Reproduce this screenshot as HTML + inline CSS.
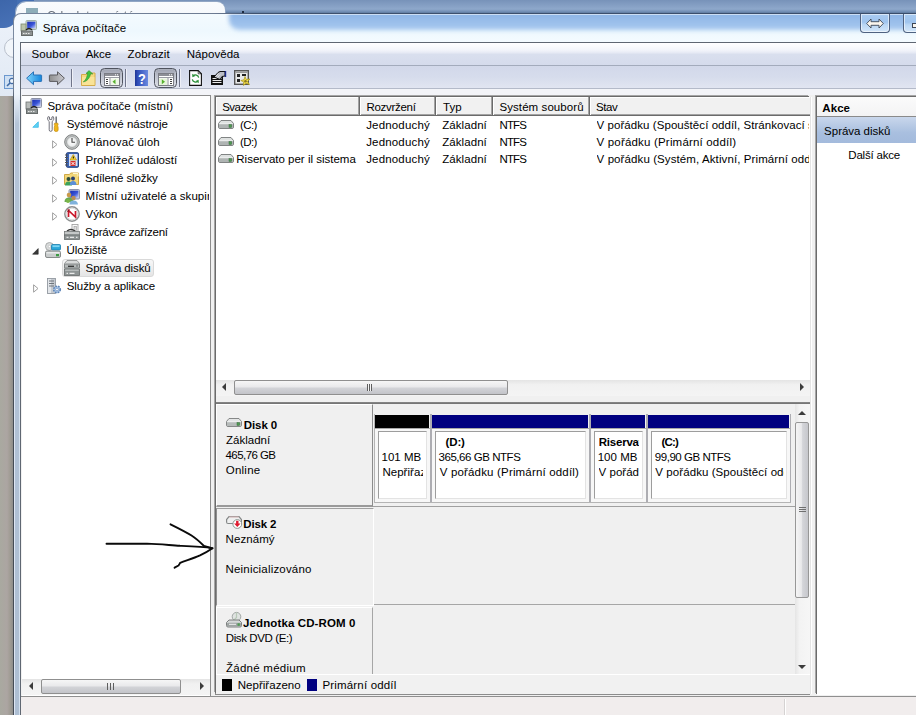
<!DOCTYPE html>
<html><head><meta charset="utf-8"><title>Správa počítače</title>
<style>
html,body{margin:0;padding:0}
body{width:916px;height:715px;overflow:hidden;position:relative;background:#f0f0f0;font-family:"Liberation Sans",sans-serif;font-size:12px;color:#000}
.a{position:absolute}
.t{position:absolute;white-space:nowrap;line-height:14px;height:14px;font-size:11.5px;color:#000}
.b{font-weight:bold}
svg{position:absolute;overflow:visible}
.sep{position:absolute;top:69px;width:1px;height:18px;background:#70758a;box-shadow:1px 0 0 #eef0f7}
.pressed{position:absolute;top:68px;width:23px;height:20px;border:1.5px solid #50545f;border-radius:4.5px;box-sizing:border-box;background:linear-gradient(#9fa3b1,#bfc3cf 45%,#dcdfe8);box-shadow:inset 0 0 0 1px rgba(255,255,255,.12)}
.tri{position:absolute;width:0;height:0}
.colsep{position:absolute;top:97px;width:1px;height:18px;background:#a3a3a3;box-shadow:1px 0 0 #6b6b6b,2px 0 0 #fff}
.hd{position:absolute;top:415px;height:13px}
.cell{position:absolute;top:429px;height:73px;background:#f7f7f7;box-sizing:border-box}
.cell i{position:absolute;left:3px;top:2px;right:3px;bottom:3px;box-sizing:border-box;background:#fff;border:1px solid #9d9d9d;border-right-color:#e3e3e3;border-bottom-color:#e3e3e3}
.vd{position:absolute;top:414px;width:2px;height:89px;background:#adadb2}
</style></head><body>

<!-- ===== background: desktop + window behind ===== -->
<div class="a" id="bgtop" style="left:0;top:0;width:916px;height:14px;background:linear-gradient(#7792b9,#8ea8cb 65%,#6a87ad 88%,#3c506c)"></div>
<div class="a" id="backleft" style="left:0;top:0;width:30px;height:96px;background:linear-gradient(#eef3fa,#e9eff8 40px,#e1e9f4)"></div>
<div class="a" id="desk2" style="left:0;top:0;width:34px;height:13px;background:#446fb3"></div>
<div class="a" id="desk" style="left:0;top:0;width:16.500px;height:28px;border-radius:0 0 13px 0;background:linear-gradient(160deg,#3d66aa,#4973b8)"></div>
<div class="a" id="backwin" style="left:16px;top:2px;width:209px;height:40px;border-radius:10px 8px 0 0;background:linear-gradient(#f9fbfd,#eef3f9);box-shadow:0 0 0 1px #91a6c4"></div>
<div class="a" style="left:26px;top:8px;width:12px;height:6px;background:#6a93a3;opacity:.75"></div>
<div class="a" style="left:47px;top:9px;width:120px;height:4.500px;overflow:hidden;white-space:nowrap;font-size:12px;line-height:14px;color:#39424f;opacity:.75;letter-spacing:.2px">Odeslat nové téma</div>
<div class="a" style="left:4px;top:38px;width:18px;height:18px;border:1px solid #b9c0cc;border-radius:50%;background:#f1f5fa"></div>
<div class="a" style="left:4px;top:75px;width:14px;height:14px;box-sizing:border-box;border:1px solid #6c98cf;background:#cfe0f3"></div>
<svg style="left:6px;top:77px" width="10" height="10" viewBox="0 0 10 10"><circle cx="6" cy="4" r="2.600" fill="#eef5fc" stroke="#3f6aa5" stroke-width="1.200"/><path d="M4 6 1 9" stroke="#3f6aa5" stroke-width="1.600"/></svg>
<div class="a" id="backgray" style="left:0;top:96px;width:14px;height:619px;background:linear-gradient(90deg,#a9a9a0,#aca5a2 50%,#a09c94 72%,#868787)"></div>
<div class="a" style="left:242px;top:11px;width:2px;height:2px;background:#1c2a40"></div>

<!-- ===== main window frame ===== -->
<div class="a" id="frameb" style="left:13px;top:13px;width:910px;height:710px;border-radius:8px 0 0 0;background:linear-gradient(90deg,#76859c 0,#6d7c93 200px,#3e516e 240px,#3a4d6a 100%)"></div>
<div class="a" style="left:13px;top:30px;width:1px;height:690px;background:linear-gradient(#7b8aa1 0,#6f7d92 60px,#454c55 72px,#454c55 100%)"></div>
<div class="a" id="frame" style="left:14px;top:14px;width:910px;height:710px;border-radius:7px 0 0 0;background:linear-gradient(#f6fafe 0,#eef4fb 80px,#b4c4d8 110px,#adbed2 100%);"></div>
<div class="a" style="left:14px;top:100px;width:1px;height:615px;background:#dde5f2"></div>
<div class="a" style="left:19px;top:100px;width:1px;height:615px;background:#d3e0ee"></div>
<div class="a" id="titlebar" style="left:21px;top:14px;width:895px;height:28px;overflow:hidden;background:linear-gradient(#f3fafe,#eef8fe 60%,#f4fbff)"><div class="a" style="left:208px;top:-8px;width:720px;height:24px;border-radius:0 0 0 10px;background:linear-gradient(#86aee2 0,#8fb6e7 9px,#a8c9ef 100%);filter:blur(2.200px)"></div><div class="a" style="left:204px;top:0;width:700px;height:1px;background:rgba(255,255,255,.55)"></div></div>

<svg style="left:21px;top:20px" width="16" height="16" viewBox="0 0 16 16"><rect x="5" y=".5" width="10.500" height="9" rx="1" fill="#c9d3cf" stroke="#9fb0a8"/><rect x="6.200" y="1.700" width="8.200" height="6.600" fill="url(#scr)"/><rect x="0" y="4" width="5" height="7" fill="#b9c4a8" stroke="#7d8a70" stroke-width=".8"/><path d="M5 10c2-2 4-2 6 0" fill="none" stroke="#222" stroke-width="1.500"/><rect x=".5" y="11" width="11" height="4.500" fill="#8d9392" stroke="#666b6a"/><path d="M2 13.500h1.500M4.500 13.500h1.500M7 13.500h1.500" stroke="#e8e8e8" stroke-width="1.200"/></svg>
<!-- caption buttons -->
<div class="a" style="left:860px;top:14px;width:30px;height:19px;box-sizing:border-box;border:1px solid #4f6281;border-top:none;border-radius:0 0 4px 4px;background:linear-gradient(#a9cbf1,#9fc4ee 45%,#b9d6f4 60%,#d4e7fa);box-shadow:inset 0 0 0 1px rgba(255,255,255,.55)"></div>
<svg style="left:866px;top:18px" width="18" height="11" viewBox="0 0 18 11"><path d="M.7 5.500 5 1v2.700h8V1l4.300 4.500L13 10V7.300H5V10z" fill="#fbf6ee" stroke="#3c4656" stroke-width=".9" stroke-linejoin="round"/></svg>
<div class="a" style="left:903px;top:14px;width:30px;height:19px;box-sizing:border-box;border:1px solid #4f6281;border-top:none;border-radius:0 0 4px 4px;background:linear-gradient(#a9cbf1,#9fc4ee 45%,#b9d6f4 60%,#d4e7fa);box-shadow:inset 0 0 0 1px rgba(255,255,255,.55)"></div>
<div class="a" style="left:912px;top:23px;width:10px;height:5px;box-sizing:border-box;background:#fbf6ee;border:1px solid #3c4656"></div>
<div class="t" id="title" style="left:42.81px;top:21px;letter-spacing:0.015px">Správa počítače</div>

<!-- ===== client ===== -->
<div class="a" id="client" style="left:21px;top:43px;width:895px;height:672px;background:#f0f0f0;box-shadow:0 0 0 1px #5f6772"></div>
<div class="a" id="menubar" style="left:21px;top:43px;width:895px;height:22px;background:linear-gradient(#fff 0,#f4f6fb 30%,#e9ecf6 42%,#d9dfee 52%,#d5dbec 100%)"></div>
<div class="t" style="left:31.46px;top:47px;letter-spacing:0.152px">Soubor</div>
<div class="t" style="left:85.75px;top:47px;letter-spacing:-0.068px">Akce</div>
<div class="t" style="left:127.62px;top:47px;letter-spacing:0.071px">Zobrazit</div>
<div class="t" style="left:186.69px;top:47px;letter-spacing:0.052px">Nápověda</div>
<div class="a" id="toolbar" style="left:21px;top:65px;width:895px;height:22px;background:linear-gradient(#d2d8ea,#d6dcec 50%,#e1e5f1);border-top:1px solid #a3abbc;border-bottom:1px solid #b4bac9"></div>
<div class="a" style="left:21px;top:89px;width:895px;height:6px;background:#f3f4f8"></div>

<!-- toolbar icons placeholder -->

<svg style="left:26px;top:71px" width="16" height="14" viewBox="0 0 16 14"><defs><linearGradient id="ga" x1="0" x2="1"><stop offset="0" stop-color="#7fd4fb"/><stop offset="1" stop-color="#1486dd"/></linearGradient><linearGradient id="gb" x1="0" x2="1"><stop offset="0" stop-color="#8e8e8e"/><stop offset="1" stop-color="#c9c9cf"/></linearGradient></defs><path d="M.6 7.2 7.5 .8V4h7.6q.5 0 .5.5v5.4q0 .5-.5.5H7.500V13.700z" fill="url(#ga)" stroke="#2b72b8" stroke-width="1"/></svg>
<svg style="left:49px;top:71px" width="16" height="14" viewBox="0 0 16 14"><path d="M15.400 7.200 8.500 .8V4H.9q-.5 0-.5.5v5.400q0 .5.500.5H8.500V13.700z" fill="url(#gb)" stroke="#5b5b5f" stroke-width="1"/></svg>
<div class="sep" style="left:71px"></div>
<svg style="left:81px;top:70px" width="15" height="16" viewBox="0 0 15 16"><path d="M.5 4.500h5l1 -1.500h7.500v12.500H.5z" fill="#f6d97f" stroke="#d3ab4b"/><path d="M1 7h12.500v8H1z" fill="#fbe9a6" opacity=".6"/><path d="M2.300 11.800C5.500 10 6 6 6.800 3.200L5 3.500 8 .6 11.800 4 9.600 3.800C8.800 8 6 11.500 2.300 11.800z" fill="#3fc43f" stroke="#2c8f2c" stroke-width=".6"/></svg>
<div class="pressed" style="left:100px"></div>
<svg style="left:104px;top:73px" width="16" height="13" viewBox="0 0 16 13"><rect x=".5" y=".5" width="15" height="12" fill="#fff" stroke="#7b7d85"/><rect x="1" y="1" width="14" height="2" fill="#8d8f96"/><rect x="11" y="1.300" width="1" height="1" fill="#fff"/><rect x="13" y="1.300" width="1" height="1" fill="#fff"/><rect x="1" y="4" width="14" height="1" fill="#9a9ca4"/><rect x="5.500" y="5" width="1" height="7.500" fill="#8d8f96"/><path d="M2 6.500h2M2 8.500h2M2 10.500h2" stroke="#444" stroke-width="1"/><rect x="7" y="5.500" width="8" height="6.500" fill="#eef8e6"/><path d="M11.500 6.200v5l-3 -2.500z" fill="#55b02e"/></svg>
<div class="sep" style="left:125px"></div>
<svg style="left:135px;top:70px" width="13" height="16" viewBox="0 0 13 16"><defs><linearGradient id="gh" x1="0" x2="1"><stop offset="0" stop-color="#1d3594"/><stop offset=".2" stop-color="#2f4db8"/><stop offset="1" stop-color="#6a8ae0"/></linearGradient></defs><rect width="13" height="16" fill="url(#gh)"/><text x="8" y="13.600" font-family="Liberation Sans" font-weight="bold" font-size="15" fill="#fff" text-anchor="middle" transform="scale(.85 1)">?</text></svg>
<div class="pressed" style="left:154px"></div>
<svg style="left:158px;top:73px" width="16" height="13" viewBox="0 0 16 13"><rect x=".5" y=".5" width="15" height="12" fill="#fff" stroke="#7b7d85"/><rect x="1" y="1" width="14" height="2" fill="#8d8f96"/><rect x="11" y="1.300" width="1" height="1" fill="#fff"/><rect x="13" y="1.300" width="1" height="1" fill="#fff"/><rect x="1" y="4" width="14" height="1" fill="#9a9ca4"/><rect x="9.500" y="5" width="1" height="7.500" fill="#8d8f96"/><path d="M12 6.500h2M12 8.500h2M12 10.500h2" stroke="#444" stroke-width="1"/><rect x="1" y="5.500" width="8" height="6.500" fill="#e6f4da"/><path d="M3.800 6.200v5l3.200 -2.500z" fill="#55b02e"/></svg>
<div class="sep" style="left:179px"></div>
<svg style="left:189px;top:70px" width="13" height="16" viewBox="0 0 13 16"><path d="M.6 .6h8.600l3.200 3.200v11.600H.6z" fill="#fff" stroke="#111" stroke-width="1.100"/><path d="M9.200 .6v3.200h3.200" fill="none" stroke="#111" stroke-width=".7"/><path d="M9.700 7.600a3.300 3.300 0 0 0 -5.600 -1.700" fill="none" stroke="#2a8f38" stroke-width="1.200"/><path d="M3.200 3.800 3.400 7.200 6.400 6z" fill="#2a8f38"/><path d="M3.300 9.400a3.300 3.300 0 0 0 5.600 1.700" fill="none" stroke="#2a8f38" stroke-width="1.200"/><path d="M9.800 13.200 9.600 9.800 6.600 11z" fill="#2a8f38"/></svg>
<svg style="left:211px;top:70px" width="16" height="15" viewBox="0 0 16 15"><rect x="0" y="5" width="12" height="10" fill="#111"/><path d="M1.500 8.500h9M1.500 10.500h9M1.500 12.500h9" stroke="#e8e8e8" stroke-width="1"/><path d="M3 7 7 2.500 9 1.500h5v4.500l-3 .5 -2 3z" fill="#b9bcc4" stroke="#111" stroke-width="1"/><path d="M5 6.500 7.500 3.500M6.500 7.500 9 4.500" stroke="#fff" stroke-width=".7"/><path d="M14.500 1v6" stroke="#1b2a8a" stroke-width="1.400"/></svg>
<svg style="left:234px;top:70px" width="17" height="16" viewBox="0 0 17 16"><rect x=".7" y=".7" width="13.600" height="13.600" fill="#e9e9e9" stroke="#555" stroke-width="1.400"/><rect x="1.500" y="1.500" width="12" height="1.500" fill="#9a9a9a"/><rect x="3" y="4" width="3" height="3" fill="#222"/><rect x="8" y="4" width="4" height="2" fill="#222"/><rect x="3" y="9" width="3" height="3" fill="#222"/><path d="M11 6.500 12.200 9.500 15.800 9 13.500 11.500 15.500 14.500 12 13.300 9.500 15.500 9.800 12 6.800 10.500 10 9.800z" fill="#f5e050" stroke="#a89410" stroke-width=".7"/><circle cx="11.500" cy="11.300" r="1.300" fill="#8a7a20"/></svg>


<!-- ===== left tree pane ===== -->
<div class="a" id="tree" style="left:22px;top:96px;width:188px;height:600px;background:#fff;box-shadow:0 -1px 0 #8c8c8c,1px 0 0 #8c8c8c,1px -1px 0 #8c8c8c"></div>
<div class="t" style="left:47.41px;top:99px;letter-spacing:0.016px">Správa počítače (místní)</div>
<div class="t" style="left:66.66px;top:117px;letter-spacing:0.021px">Systémové nástroje</div>
<div class="t" style="left:85.50px;top:135px;letter-spacing:0.164px">Plánovač úloh</div>
<div class="t" style="left:85.50px;top:153px;letter-spacing:0.011px">Prohlížeč událostí</div>
<div class="t" style="left:85.11px;top:171px;letter-spacing:-0.110px">Sdílené složky</div>
<div class="t" style="left:85.59px;top:189px;width:123.01px;overflow:hidden;letter-spacing:0.078px">Místní uživatelé a skupiny</div>
<div class="t" style="left:85.52px;top:207px;letter-spacing:0.009px">Výkon</div>
<div class="t" style="left:85.11px;top:225px;letter-spacing:-0.223px">Správce zařízení</div>
<div class="t" style="left:66.61px;top:243px;letter-spacing:-0.058px">Úložiště</div>
<div class="a" style="left:62px;top:259px;width:92px;height:17.5px;background:linear-gradient(#f8f8f8,#e5e5e5);border:1px solid #d9d9d9;border-radius:3px;box-sizing:border-box"></div>
<div class="t" style="left:85.61px;top:261px;letter-spacing:-0.130px">Správa disků</div>
<div class="t" style="left:66.71px;top:279px;letter-spacing:-0.064px">Služby a aplikace</div>
<svg style="left:26px;top:98px" width="16" height="16" viewBox="0 0 16 16"><defs><linearGradient id="scr" x1="0" y1="0" x2="1" y2="1"><stop offset="0" stop-color="#1b2fb0"/><stop offset=".55" stop-color="#3a55d8"/><stop offset="1" stop-color="#c9d4ff"/></linearGradient></defs><rect x="5" y=".5" width="10.500" height="9" rx="1" fill="#c9ccd6" stroke="#8a90a6"/><rect x="6.200" y="1.700" width="8.200" height="6.600" fill="url(#scr)"/><rect x="0" y="4" width="5" height="7" fill="#b7bbb9" stroke="#6e7372" stroke-width=".8"/><path d="M5 10c2-2 4-2 6 0" fill="none" stroke="#222" stroke-width="1.500"/><rect x=".5" y="11" width="11" height="4.500" fill="#8d9392" stroke="#666b6a"/><path d="M2 13.500h1.500M4.500 13.500h1.500M7 13.500h1.500" stroke="#e8e8e8" stroke-width="1.200"/></svg><svg style="left:32px;top:121px" width="7" height="7" viewBox="0 0 7 7"><path d="M6.300 .8v5.500H.8z" fill="#5fd3f3" stroke="#3cb9e8" stroke-width=".8"/></svg><svg style="left:47px;top:116px" width="12" height="16" viewBox="0 0 12 16"><path d="M1.200 .6c-1.200 1.800 -.6 3.800 1 4.900v8.300q0 1.600 1.500 1.600t1.500 -1.600V5.500c1.600 -1.100 2.200 -3.100 1 -4.900l-1.300 .4v2.400h-2.400V1z" fill="#f6f6f6" stroke="#75757e" stroke-width="1"/><path d="M9.200 .5v7" stroke="#70747a" stroke-width="1.500"/><path d="M7.600 7.200h3.200l.3 1.500 -.5 1 .5 1.500v2.800q0 1.500 -1.900 1.500t-1.900 -1.500v-2.800l.5 -1.500 -.5 -1z" fill="#f0b719" stroke="#c48a0c" stroke-width=".7"/></svg><svg style="left:52px;top:139.5px" width="6" height="9" viewBox="0 0 6 9"><path d="M.6 .8v7.400L5 4.500z" fill="#fff" stroke="#a0a0a0" stroke-width="1"/></svg><svg style="left:64px;top:134px" width="16" height="16" viewBox="0 0 16 16"><defs><radialGradient id="clk"><stop offset="0" stop-color="#fff"/><stop offset=".7" stop-color="#eceeee"/><stop offset="1" stop-color="#b9bcbc"/></radialGradient></defs><circle cx="8" cy="8" r="7.300" fill="#c4c7c7" stroke="#7d8080" stroke-width="1"/><circle cx="8" cy="8" r="5.600" fill="url(#clk)" stroke="#9a9d9d" stroke-width=".6"/><path d="M8 4v4.300h3" fill="none" stroke="#444" stroke-width="1.100"/></svg><svg style="left:52px;top:157.5px" width="6" height="9" viewBox="0 0 6 9"><path d="M.6 .8v7.400L5 4.500z" fill="#fff" stroke="#a0a0a0" stroke-width="1"/></svg><svg style="left:64px;top:152px" width="16" height="16" viewBox="0 0 16 16"><rect x="2.500" y=".7" width="12" height="14.600" rx="1" fill="#3b64b8" stroke="#24427f"/><rect x="5" y="2" width="8.500" height="12" fill="#d7e1f5"/><path d="M1 3h3M1 5.500h3M1 8h3M1 10.500h3M1 13h3" stroke="#555" stroke-width="1"/><path d="M9.300 2.500 12.500 8H6z" fill="#f7d43a" stroke="#b48a00" stroke-width=".6"/><path d="M9.300 4.500v2" stroke="#000" stroke-width="1"/><rect x="6.500" y="9" width="5" height="5" fill="#d9302c"/><path d="M7.500 10 10.500 13M10.500 10 7.500 13" stroke="#fff" stroke-width="1"/></svg><svg style="left:52px;top:175.5px" width="6" height="9" viewBox="0 0 6 9"><path d="M.6 .8v7.400L5 4.500z" fill="#fff" stroke="#a0a0a0" stroke-width="1"/></svg><svg style="left:64px;top:171px" width="16" height="16" viewBox="0 0 16 16"><path d="M.5 3.500h5l1.200 -1.500h7.800v11.500H.5z" fill="#f3d779" stroke="#d0a945"/><path d="M9 2.500h5v3" fill="none" stroke="#fff7d0" stroke-width="1"/><circle cx="4.500" cy="8" r="2" fill="#2f4f3a"/><path d="M1 14.500q0 -4 3.500 -4t3.500 4z" fill="#3da35a"/><circle cx="9" cy="7.500" r="2" fill="#2a3f6e"/><path d="M5.800 14q0 -4 3.300 -4t3.400 4z" fill="#5b8fd6"/></svg><svg style="left:52px;top:193.5px" width="6" height="9" viewBox="0 0 6 9"><path d="M.6 .8v7.400L5 4.500z" fill="#fff" stroke="#a0a0a0" stroke-width="1"/></svg><svg style="left:64px;top:189px" width="16" height="16" viewBox="0 0 16 16"><rect x="5" y=".5" width="10.500" height="9.500" rx="1" fill="#c3c8d8" stroke="#8e95ad"/><rect x="6.200" y="1.700" width="8.200" height="7" fill="url(#scr)"/><circle cx="5" cy="6" r="2.300" fill="#c99a4a"/><path d="M.5 13q0 -4.500 4.500 -4.500t4.500 4.500z" fill="#6aa84f"/><circle cx="9.500" cy="9" r="2.200" fill="#b98d55"/><path d="M5.500 15.500q0 -4 4 -4t4.500 4z" fill="#7fb2dc"/><circle cx="4" cy="12" r="2" fill="#7ab648"/></svg><svg style="left:52px;top:211.5px" width="6" height="9" viewBox="0 0 6 9"><path d="M.6 .8v7.400L5 4.500z" fill="#fff" stroke="#a0a0a0" stroke-width="1"/></svg><svg style="left:64px;top:206px" width="16" height="16" viewBox="0 0 16 16"><circle cx="8" cy="8" r="7.200" fill="#fff" stroke="#8c8f8f" stroke-width="1.400"/><circle cx="8" cy="8" r="5.800" fill="#fff" stroke="#c9cccc" stroke-width=".7"/><path d="M4.500 11V4.500L11.500 11V5" fill="none" stroke="#c9182b" stroke-width="1.700"/><path d="M3.500 6 5.500 3.500" stroke="#7a0f1a" stroke-width="1"/></svg><svg style="left:64px;top:224px" width="16" height="16" viewBox="0 0 16 16"><rect x="8" y=".500" width="6" height="7" fill="#fafafa" stroke="#9a9a9a" stroke-width=".8"/><rect x="10" y="2.500" width="2.500" height="4" fill="#ddd" stroke="#999" stroke-width=".6"/><path d="M3 7q4 -3 8 0" fill="none" stroke="#333" stroke-width="1.400"/><rect x=".5" y="7.500" width="15" height="3.500" fill="#c5c8c8" stroke="#777b7b" stroke-width=".8"/><rect x=".5" y="11" width="15" height="4.500" fill="#8e9494" stroke="#666b6b" stroke-width=".8"/><path d="M2.500 13.300h2M6 13.300h4M12 13.300h1.500" stroke="#e6e6e6" stroke-width="1.200"/></svg><svg style="left:32px;top:248px" width="7" height="7" viewBox="0 0 7 7"><path d="M6.200 .6v5.600H.6z" fill="#3a3a3a" stroke="#222" stroke-width=".6"/></svg><svg style="left:45px;top:242px" width="16" height="16" viewBox="0 0 16 16"><circle cx="4.500" cy="4.500" r="4" fill="#d8dada" stroke="#9a9d9d" stroke-width=".8"/><circle cx="4.500" cy="4.500" r="1.200" fill="#fff" stroke="#aaa" stroke-width=".5"/><rect x="6.500" y="2.500" width="9" height="5.500" rx="1" fill="#2aa6d8" stroke="#1b7fae" stroke-width=".8"/><rect x="7.500" y="3.300" width="7" height="1.800" fill="#7fd5f2"/><rect x=".5" y="9" width="15" height="6.500" rx="1.500" fill="#c9cccc" stroke="#7c8080" stroke-width=".9"/><rect x="1.500" y="10" width="13" height="1.500" fill="#e8eaea"/><rect x="11" y="12" width="3" height="2.300" fill="#3b9a42"/></svg><svg style="left:64px;top:260px" width="16" height="16" viewBox="0 0 16 16"><path d="M3 .5h10l2.500 3v4.500H.5v-4.500z" fill="#d9dbdb" stroke="#858888" stroke-width=".8"/><rect x=".5" y="4" width="15" height="4" rx=".8" fill="#b4b8b8" stroke="#747878" stroke-width=".8"/><path d="M4 6.300h6" stroke="#333" stroke-width="1.300"/><rect x="12" y="4.800" width="2" height="2" fill="#8a8f8f"/><rect x=".5" y="9" width="15" height="6.500" fill="#8e9494" stroke="#666b6b" stroke-width=".8"/><rect x="1.200" y="9.500" width="13.600" height="1.500" fill="#b5baba"/><path d="M2.500 13.300h1.500M5.500 13.300h5" stroke="#ececec" stroke-width="1.300"/></svg><svg style="left:33px;top:283.5px" width="6" height="9" viewBox="0 0 6 9"><path d="M.6 .8v7.400L5 4.500z" fill="#fff" stroke="#a0a0a0" stroke-width="1"/></svg><svg style="left:47px;top:278px" width="15" height="16" viewBox="0 0 15 16"><rect x=".5" y=".5" width="8" height="15" fill="#c4c9cf" stroke="#8b9198" stroke-width=".8"/><rect x="1" y="1" width="3" height="14" fill="#e3e6ea"/><path d="M2 3h5M2 5.500h5M2 8h5" stroke="#6f757c" stroke-width="1"/><circle cx="10" cy="11.500" r="3.300" fill="#a9c4e6" stroke="#5f86b8" stroke-width="1.600" stroke-dasharray="1.700 1"/><circle cx="10" cy="11.500" r="1.300" fill="#fff" stroke="#5f86b8" stroke-width=".6"/></svg>

<!-- ===== middle list pane ===== -->
<div class="a" id="mid" style="left:216px;top:97px;width:594px;height:597px;background:#f0f0f0;box-shadow:-1px -1px 0 #6b6b6b,-2px -2px 0 #a6a6a6,-1px 1px 0 #8c8c8c,0 1px 0 #8c8c8c,1px 0 0 #e4e4e4,2px 0 0 #fff"></div>
<div class="a" id="list" style="left:216px;top:97px;width:594px;height:283px;background:#fff"></div>
<div class="a" id="lhead" style="left:216px;top:97px;width:594px;height:19px;box-sizing:border-box;background:#f1f1f1;border-top:1px solid #fff;border-bottom:1px solid #6b6b6b;box-shadow:inset 0 -1px 0 #a3a3a3,inset 1px 0 0 #fff"></div>
<div class="colsep" style="left:358px"></div>
<div class="colsep" style="left:434px"></div>
<div class="colsep" style="left:491px"></div>
<div class="colsep" style="left:588px"></div>
<div class="t" style="left:222.26px;top:100px;letter-spacing:-0.555px">Svazek</div>
<div class="t" style="left:366.50px;top:100px;letter-spacing:-0.301px">Rozvržení</div>
<div class="t" style="left:443.11px;top:100px;letter-spacing:0.019px">Typ</div>
<div class="t" style="left:499.46px;top:100px;letter-spacing:0.081px">Systém souborů</div>
<div class="t" style="left:596.01px;top:100px;letter-spacing:-0.415px">Stav</div>

<div class="t" style="left:239.88px;top:118px;letter-spacing:-0.530px">(C:)</div>
<div class="t" style="left:239.88px;top:135px;letter-spacing:-0.530px">(D:)</div>
<div class="t" style="left:236.30px;top:152px;letter-spacing:0.000px">Riservato per il sistema</div>
<div class="t" style="left:366.15px;top:118px;letter-spacing:0.173px">Jednoduchý</div>
<div class="t" style="left:366.15px;top:135px;letter-spacing:0.173px">Jednoduchý</div>
<div class="t" style="left:366.15px;top:152px;letter-spacing:0.173px">Jednoduchý</div>
<div class="t" style="left:442.27px;top:118px;letter-spacing:0.062px">Základní</div>
<div class="t" style="left:442.27px;top:135px;letter-spacing:0.062px">Základní</div>
<div class="t" style="left:442.27px;top:152px;letter-spacing:0.062px">Základní</div>
<div class="t" style="left:499.59px;top:118px;letter-spacing:-0.894px">NTFS</div>
<div class="t" style="left:499.59px;top:135px;letter-spacing:-0.894px">NTFS</div>
<div class="t" style="left:499.59px;top:152px;letter-spacing:-0.894px">NTFS</div>
<div class="t" style="left:596.57px;top:118px;width:212.93px;overflow:hidden;letter-spacing:0.062px">V pořádku (Spouštěcí oddíl, Stránkovací soubor)</div>
<div class="t" style="left:596.57px;top:135px;letter-spacing:0.182px">V pořádku (Primární oddíl)</div>
<div class="t" style="left:596.57px;top:152px;width:212.93px;overflow:hidden;letter-spacing:0.099px">V pořádku (Systém, Aktivní, Primární oddíl)</div>
<svg style="left:218px;top:120px" width="16" height="9" viewBox="0 0 16 9"><path d="M3 .5h10l2.500 3v3.500q0 1.500 -1.500 1.500h-12q-1.500 0 -1.500 -1.500v-3.500z" fill="#dfe2e1" stroke="#747777" stroke-width=".9"/><rect x="1" y="3.800" width="14" height="4.300" rx="1.200" fill="#afb4b3"/><rect x="1.500" y="3.300" width="13" height=".9" fill="#f4f5f5"/><rect x="11" y="4.600" width="2.600" height="2.800" fill="#4c9a50" stroke="#3a6d3d" stroke-width=".5"/></svg><svg style="left:218px;top:137px" width="16" height="9" viewBox="0 0 16 9"><path d="M3 .5h10l2.500 3v3.500q0 1.500 -1.500 1.500h-12q-1.500 0 -1.500 -1.500v-3.500z" fill="#dfe2e1" stroke="#747777" stroke-width=".9"/><rect x="1" y="3.800" width="14" height="4.300" rx="1.200" fill="#afb4b3"/><rect x="1.500" y="3.300" width="13" height=".9" fill="#f4f5f5"/><rect x="11" y="4.600" width="2.600" height="2.800" fill="#4c9a50" stroke="#3a6d3d" stroke-width=".5"/></svg><svg style="left:218px;top:154px" width="16" height="9" viewBox="0 0 16 9"><path d="M3 .5h10l2.500 3v3.500q0 1.500 -1.500 1.500h-12q-1.500 0 -1.500 -1.500v-3.500z" fill="#dfe2e1" stroke="#747777" stroke-width=".9"/><rect x="1" y="3.800" width="14" height="4.300" rx="1.200" fill="#afb4b3"/><rect x="1.500" y="3.300" width="13" height=".9" fill="#f4f5f5"/><rect x="11" y="4.600" width="2.600" height="2.800" fill="#4c9a50" stroke="#3a6d3d" stroke-width=".5"/></svg>

<!-- ===== right actions pane ===== -->
<div class="a" id="actions" style="left:817px;top:97px;width:110px;height:598px;background:#fff;box-shadow:-1px -1px 0 #6b6b6b,-2px -2px 0 #a6a6a6"></div>
<div class="a" style="left:817px;top:97px;width:99px;height:19px;background:linear-gradient(#fbfbfb,#f3f3f4);border-bottom:1px solid #8a8a8a"></div>
<div class="t b" style="left:822.36px;top:101px;letter-spacing:0.053px">Akce</div>
<div class="a" style="left:817px;top:117px;width:99px;height:26px;background:linear-gradient(#c9d7ec,#a9bfdf 60%,#a3badc)"></div>
<div class="t" style="left:824.11px;top:124px;letter-spacing:-0.021px">Správa disků</div>
<div class="t" style="left:848.34px;top:148px;letter-spacing:-0.204px">Další akce</div>

<!-- ===== lower graphical view ===== -->
<div class="a" id="gview" style="left:216px;top:402px;width:594px;height:2px;background:linear-gradient(#8a8a8a,#6f6f6f)"></div>

<!-- disk rows -->
<div class="a" style="left:216px;top:404px;width:157px;height:103px;box-sizing:border-box;background:#f0f0f0;border-top:1px solid #fff;border-left:1px solid #fff;border-right:1px solid #8c8c8c;border-bottom:2px solid #9a9a9a"></div>
<div class="a" style="left:373px;top:506px;width:422px;height:1px;background:#a0a0a0"></div>
<div class="a" style="left:216px;top:508px;width:158px;height:98px;box-sizing:border-box;background:#f0f0f0;border-top:1px solid #a0a0a0;border-left:1px solid #8e8e8e;border-right:1px solid #fff;border-bottom:1px solid #fff"></div>
<div class="a" style="left:374px;top:604px;width:421px;height:1px;background:#a6a6a6"></div>
<div class="a" style="left:216px;top:607px;width:157px;height:67px;box-sizing:border-box;background:#f0f0f0;border-top:1px solid #fff;border-left:1px solid #fff;border-right:1px solid #a6a6a6"></div>
<!-- partitions disk 0 -->
<div class="a" style="left:374px;top:414px;width:1px;height:89px;background:#b5b5b5"></div>
<div class="hd" style="left:375px;width:54px;background:#000"></div>
<div class="hd" style="left:432px;width:156px;background:#000080"></div>
<div class="hd" style="left:591px;width:54px;background:#000080"></div>
<div class="hd" style="left:648px;width:141px;background:#000080"></div>
<div class="a" style="left:375px;top:428px;width:416px;height:1px;background:#a8a8a8"></div>
<div class="cell" style="left:375px;width:55px"><i></i></div>
<div class="cell" style="left:432px;width:157px"><i></i></div>
<div class="cell" style="left:591px;width:55px"><i></i></div>
<div class="cell" style="left:648px;width:142px"><i></i></div>
<div class="vd" style="left:430px"></div>
<div class="vd" style="left:589px"></div>
<div class="vd" style="left:646px"></div>
<div class="vd" style="left:790px;width:1px"></div>
<div class="a" style="left:375px;top:502px;width:416px;height:1px;background:#b4b4b4"></div>
<div class="t" style="left:381.47px;top:450px;letter-spacing:0.025px">101 MB</div>
<div class="t" style="left:382.39px;top:465px;width:40.51px;overflow:hidden;letter-spacing:0.049px">Nepřiřazeno</div>
<div class="t b" style="left:445.56px;top:435px;letter-spacing:-0.153px">(D:)</div>
<div class="t" style="left:438.56px;top:450px;letter-spacing:-0.457px">365,66 GB NTFS</div>
<div class="t" style="left:439.72px;top:465px;letter-spacing:0.170px">V pořádku (Primární oddíl)</div>
<div class="t b" style="left:598.70px;top:435px;width:40.30px;overflow:hidden;letter-spacing:-0.205px">Riservato per il sistema</div>
<div class="t" style="left:597.67px;top:450px;letter-spacing:0.045px">100 MB</div>
<div class="t" style="left:598.57px;top:465px;width:40.43px;overflow:hidden;letter-spacing:0.027px">V pořádku (Systém, Aktivní, Primární oddíl)</div>
<div class="t b" style="left:661.51px;top:435px;letter-spacing:-0.803px">(C:)</div>
<div class="t" style="left:654.86px;top:450px;letter-spacing:-0.471px">99,90 GB NTFS</div>
<div class="t" style="left:655.37px;top:465px;width:128.63px;overflow:hidden;letter-spacing:0.071px">V pořádku (Spouštěcí oddíl, Stránkovací soubor)</div>
<!-- legend -->
<div class="a" style="left:216px;top:674px;width:594px;height:20px;background:#f1f1f1;border-top:1px solid #fff;box-sizing:border-box"></div>
<div class="a" style="left:222px;top:679px;width:10px;height:12px;background:#000"></div>
<div class="a" style="left:307px;top:679px;width:10px;height:12px;background:#000080"></div>
<!-- v scrollbar -->
<div class="a" style="left:795px;top:404px;width:15px;height:270px;background:linear-gradient(90deg,#e5e5e5,#f3f3f3 30%,#f6f6f6)"></div>
<div class="a" style="left:795px;top:422px;width:14px;height:176px;box-sizing:border-box;border:1px solid #979797;border-radius:2px;background:linear-gradient(90deg,#f5f5f5,#e9e9eb 45%,#d4d5d9 55%,#c6c7cc)"></div>
<div class="tri" style="left:798px;top:411px;border-left:4px solid transparent;border-right:4px solid transparent;border-bottom:4px solid #3c3c3c"></div>
<div class="tri" style="left:798px;top:665px;border-left:4px solid transparent;border-right:4px solid transparent;border-top:4px solid #3c3c3c"></div>
<div class="a" style="left:799px;top:507px;width:7px;height:1px;background:#6f6f6f;box-shadow:0 2px 0 #6f6f6f,0 4px 0 #6f6f6f"></div>

<div class="t b" style="left:243.70px;top:418px;letter-spacing:-0.060px">Disk 0</div>
<div class="t" style="left:225.92px;top:433px;letter-spacing:0.033px">Základní</div>
<div class="t" style="left:225.52px;top:448px;letter-spacing:-0.564px">465,76 GB</div>
<div class="t" style="left:225.74px;top:463px;letter-spacing:0.246px">Online</div>
<div class="t b" style="left:243.30px;top:517px;letter-spacing:-0.174px">Disk 2</div>
<div class="t" style="left:225.54px;top:532px;letter-spacing:0.081px">Neznámý</div>
<div class="t" style="left:225.54px;top:562px;letter-spacing:0.185px">Neinicializováno</div>
<div class="t b" style="left:243.09px;top:616px;letter-spacing:0.107px">Jednotka CD-ROM 0</div>
<div class="t" style="left:225.74px;top:631px;letter-spacing:-0.383px">Disk DVD (E:)</div>
<div class="t" style="left:225.97px;top:661px;letter-spacing:0.261px">Žádné médium</div>
<div class="t" style="left:237.74px;top:678px;letter-spacing:0.029px">Nepřiřazeno</div>
<div class="t" style="left:322.40px;top:678px;letter-spacing:0.178px">Primární oddíl</div>


<!-- disk icons in graphical view -->
<svg style="left:226px;top:418px" width="16" height="9" viewBox="0 0 16 9"><path d="M3 .5h10l2.500 3v3.500q0 1.500 -1.500 1.500h-12q-1.500 0 -1.500 -1.500v-3.500z" fill="#e4e6e6" stroke="#7a7d7d" stroke-width=".9"/><rect x="1" y="3.800" width="14" height="4.300" rx="1.200" fill="#b6bbba"/><rect x="1.500" y="3.300" width="13" height=".9" fill="#f6f7f7"/><rect x="11" y="4.600" width="2.600" height="2.800" fill="#4c9a50" stroke="#3a6d3d" stroke-width=".5"/></svg>
<svg style="left:226px;top:516px" width="16" height="13" viewBox="0 0 16 13"><path d="M3 .6h10l2.400 2.900v2.500q0 1.500 -1.500 1.500h-11.800q-1.500 0 -1.500 -1.500v-2.500z" fill="#eff0f0" stroke="#858888" stroke-width="1.200"/><path d="M3.300 1h9.400" stroke="#f0c4c4" stroke-width=".8"/><circle cx="11.300" cy="8" r="4.400" fill="#fff" stroke="#8a9690" stroke-width="1"/><path d="M10.100 4.800h2.400v2.700h2l-3.200 3.600 -3.200 -3.600h2z" fill="#de1a2e"/></svg>
<svg style="left:226px;top:612px" width="16" height="16" viewBox="0 0 16 16"><circle cx="10.500" cy="4.700" r="4.300" fill="#dfe3e1" stroke="#8f9693" stroke-width=".8"/><path d="M10.500 .5v5l-3 3" fill="none" stroke="#b7c9b7" stroke-width="1.200"/><path d="M3 8h10l2.500 2.500v3q0 1.500 -1.500 1.500h-12q-1.500 0 -1.500 -1.500v-3z" fill="#d5d8d8" stroke="#6f7373" stroke-width=".9"/><rect x="1" y="10.800" width="14" height="3.800" rx="1.200" fill="#9ea4a3"/><path d="M3 12.300h7" stroke="#f2f2f2" stroke-width="1"/><rect x="11.500" y="11.300" width="2.300" height="2.500" fill="#4c9a50"/></svg>

<!-- list h-scrollbar -->
<div class="a" style="left:216px;top:380px;width:594px;height:16px;background:linear-gradient(#e4e4e4,#f1f1f1 30%,#f4f4f4)"></div>
<div class="a" style="left:234px;top:380px;width:274px;height:15px;box-sizing:border-box;border:1px solid #8f8f8f;border-radius:2px;background:linear-gradient(#f6f6f6,#e9e9eb 45%,#d2d3d7 55%,#c3c4c9)"></div>
<div class="a" style="left:367px;top:384px;width:1px;height:7px;background:#5e5e5e;box-shadow:2px 0 0 #5e5e5e,4px 0 0 #5e5e5e,1px 0 0 #f4f4f4,3px 0 0 #f4f4f4"></div>
<div class="tri" style="left:222px;top:383px;border-top:4px solid transparent;border-bottom:4px solid transparent;border-right:4px solid #3c3c3c"></div>
<div class="tri" style="left:800px;top:383px;border-top:4px solid transparent;border-bottom:4px solid transparent;border-left:4px solid #3c3c3c"></div>
<div class="a" style="left:216px;top:396px;width:594px;height:6px;background:#f0f0f0"></div>

<!-- tree h-scrollbar -->
<div class="a" style="left:22px;top:679px;width:188px;height:16px;background:linear-gradient(#e4e4e4,#f1f1f1 30%,#f4f4f4)"></div>
<div class="a" style="left:41px;top:679px;width:140px;height:15px;box-sizing:border-box;border:1px solid #8f8f8f;border-radius:2px;background:linear-gradient(#f6f6f6,#e9e9eb 45%,#d2d3d7 55%,#c3c4c9)"></div>
<div class="a" style="left:107px;top:683px;width:1px;height:7px;background:#5e5e5e;box-shadow:3px 0 0 #5e5e5e,6px 0 0 #5e5e5e"></div>
<div class="tri" style="left:29px;top:682px;border-top:4px solid transparent;border-bottom:4px solid transparent;border-right:4px solid #3c3c3c"></div>
<div class="tri" style="left:200px;top:682px;border-top:4px solid transparent;border-bottom:4px solid transparent;border-left:4px solid #3c3c3c"></div>

<!-- hand-drawn arrow -->
<svg style="left:0;top:0" width="916" height="715" viewBox="0 0 916 715"><path d="M106.500 543.700 L147 543.600 C160 544,170 545.200,180 545.800 C192 546.200,203 546.500,212.500 548.200" fill="none" stroke="#0a0a0a" stroke-width="1.900" stroke-linecap="round"/><path d="M170.500 524.300 C179 528.500,186 532,191.500 535.500 C197 539,201 543,204 546 L212.500 548.300 C208 551.500,204 553.500,200 555.400 C193 558.500,186 560.500,180.200 562.800 C179.500 564,179 565,178.500 565.500 L174.600 567.700" fill="none" stroke="#0a0a0a" stroke-width="1.900" stroke-linecap="round" stroke-linejoin="round"/></svg>

<!-- ===== status bar ===== -->
<div class="a" id="status" style="left:21px;top:696px;width:895px;height:19px;background:#f1eded;border-top:1px solid #8f8f8f;box-sizing:border-box"></div>
<div class="a" style="left:784px;top:699px;width:1px;height:16px;background:#d5d2d2;box-shadow:1px 0 0 #fff"></div>
</body></html>
